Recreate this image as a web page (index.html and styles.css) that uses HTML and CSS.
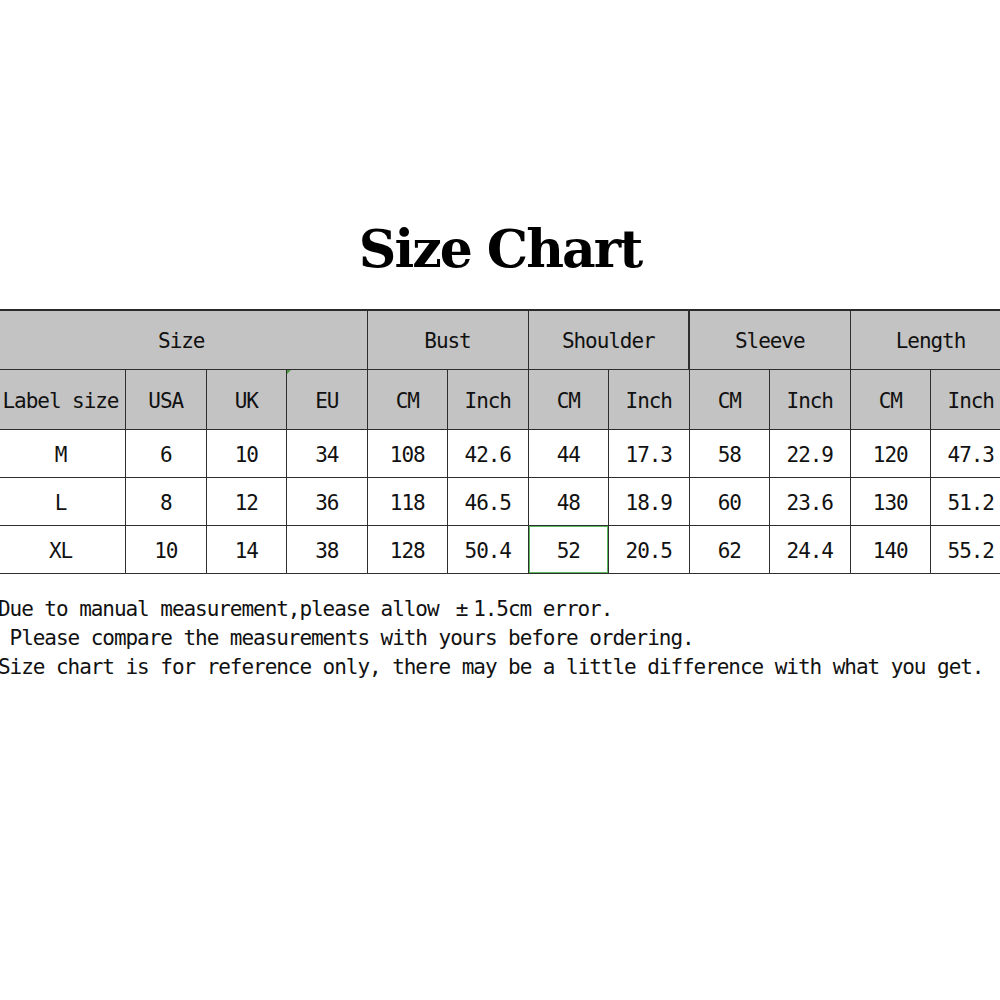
FILE: index.html
```html
<!DOCTYPE html>
<html lang="en">
<head>
<meta charset="utf-8">
<title>Size Chart</title>
<link rel="stylesheet" href="styles.css">
</head>
<body>
<div class="page">
  <h1 class="title">Size Chart</h1>
  <table class="chart">
    <colgroup>
      <col class="c-first">
      <col class="c"><col class="c"><col class="c">
      <col class="c"><col class="c">
      <col class="c"><col class="c">
      <col class="c"><col class="c">
      <col class="c"><col class="c">
    </colgroup>
    <thead>
      <tr class="head1">
        <th colspan="4">Size</th>
        <th colspan="2">Bust</th>
        <th colspan="2" class="thick-r">Shoulder</th>
        <th colspan="2">Sleeve</th>
        <th colspan="2">Length</th>
      </tr>
      <tr class="head2">
        <th>Label size</th>
        <th>USA</th>
        <th>UK</th>
        <th class="mark">EU</th>
        <th>CM</th>
        <th>Inch</th>
        <th>CM</th>
        <th>Inch</th>
        <th>CM</th>
        <th>Inch</th>
        <th>CM</th>
        <th>Inch</th>
      </tr>
    </thead>
    <tbody>
      <tr>
        <td>M</td><td>6</td><td>10</td><td>34</td>
        <td>108</td><td>42.6</td><td>44</td><td>17.3</td>
        <td>58</td><td>22.9</td><td>120</td><td>47.3</td>
      </tr>
      <tr>
        <td>L</td><td>8</td><td>12</td><td>36</td>
        <td>118</td><td>46.5</td><td>48</td><td>18.9</td>
        <td>60</td><td>23.6</td><td>130</td><td>51.2</td>
      </tr>
      <tr>
        <td>XL</td><td>10</td><td>14</td><td>38</td>
        <td>128</td><td>50.4</td><td class="sel">52</td><td>20.5</td>
        <td>62</td><td>24.4</td><td>140</td><td>55.2</td>
      </tr>
    </tbody>
  </table>
  <div class="notes">
    <p class="note">Due to manual measurement,please allow <span class="wide">±</span>1.5cm error.</p>
    <p class="note"> Please compare the measurements with yours before ordering.</p>
    <p class="note">Size chart is for reference only, there may be a little difference with what you get.</p>
  </div>
</div>
</body>
</html>
```

FILE: styles.css
```css
html, body {
  margin: 0;
  padding: 0;
  background: #ffffff;
  overflow: hidden;
}

.page {
  width: 1000px;
  height: 1000px;
  padding-top: 219px;
  box-sizing: border-box;
}

.title {
  margin: 0;
  height: 60px;
  line-height: 60px;
  text-align: center;
  font-family: "DejaVu Serif", "Liberation Serif", serif;
  font-weight: bold;
  font-size: 52px;
  letter-spacing: -2px;
  color: #000;
}

.chart {
  margin-top: 30px;
  margin-left: -5px;
  border-collapse: collapse;
  table-layout: fixed;
  width: 1016px;
  font-family: "DejaVu Sans Mono", "Liberation Mono", monospace;
  font-size: 21px;
  letter-spacing: -1.05px;
  color: #111111;
}

.c-first { width: 130px; }
.c { width: 80.5px; }

.chart th,
.chart td {
  border: 1px solid #2e2e2e;
  padding: 3px 0 0;
  text-align: center;
  font-weight: normal;
  white-space: nowrap;
  overflow: hidden;
}

.chart thead tr.head1 th {
  border-top: 2px solid #2a2a2a;
}

.chart th {
  background: #c3c3c3;
}

.head1 { height: 59px; }
.head2 { height: 60px; }
.chart tbody tr { height: 48px; }

.thick-r {
  border-right-width: 2px !important;
}

.mark {
  position: relative;
}
.mark::before {
  content: "";
  position: absolute;
  left: 0;
  top: 0;
  width: 0;
  height: 0;
  border-top: 4px solid #4a9a3a;
  border-right: 4px solid transparent;
}

.sel {
  position: relative;
}
.sel::before {
  content: "";
  position: absolute;
  left: -1px;
  top: -1px;
  right: -1px;
  bottom: -1px;
  border: 2px solid #5cb85c;
}
.sel::after {
  content: "";
  position: absolute;
  right: -3px;
  bottom: -3px;
  width: 4px;
  height: 4px;
  background: #5cb85c;
}

.notes {
  margin-top: 21px;
  margin-left: -2px;
  font-family: "DejaVu Sans Mono", "Liberation Mono", monospace;
  font-size: 21px;
  letter-spacing: -1.05px;
  color: #111111;
}

.note {
  margin: 0;
  line-height: 29px;
  white-space: pre;
}

.wide {
  display: inline-block;
  width: 23px;
  text-align: center;
}
```
